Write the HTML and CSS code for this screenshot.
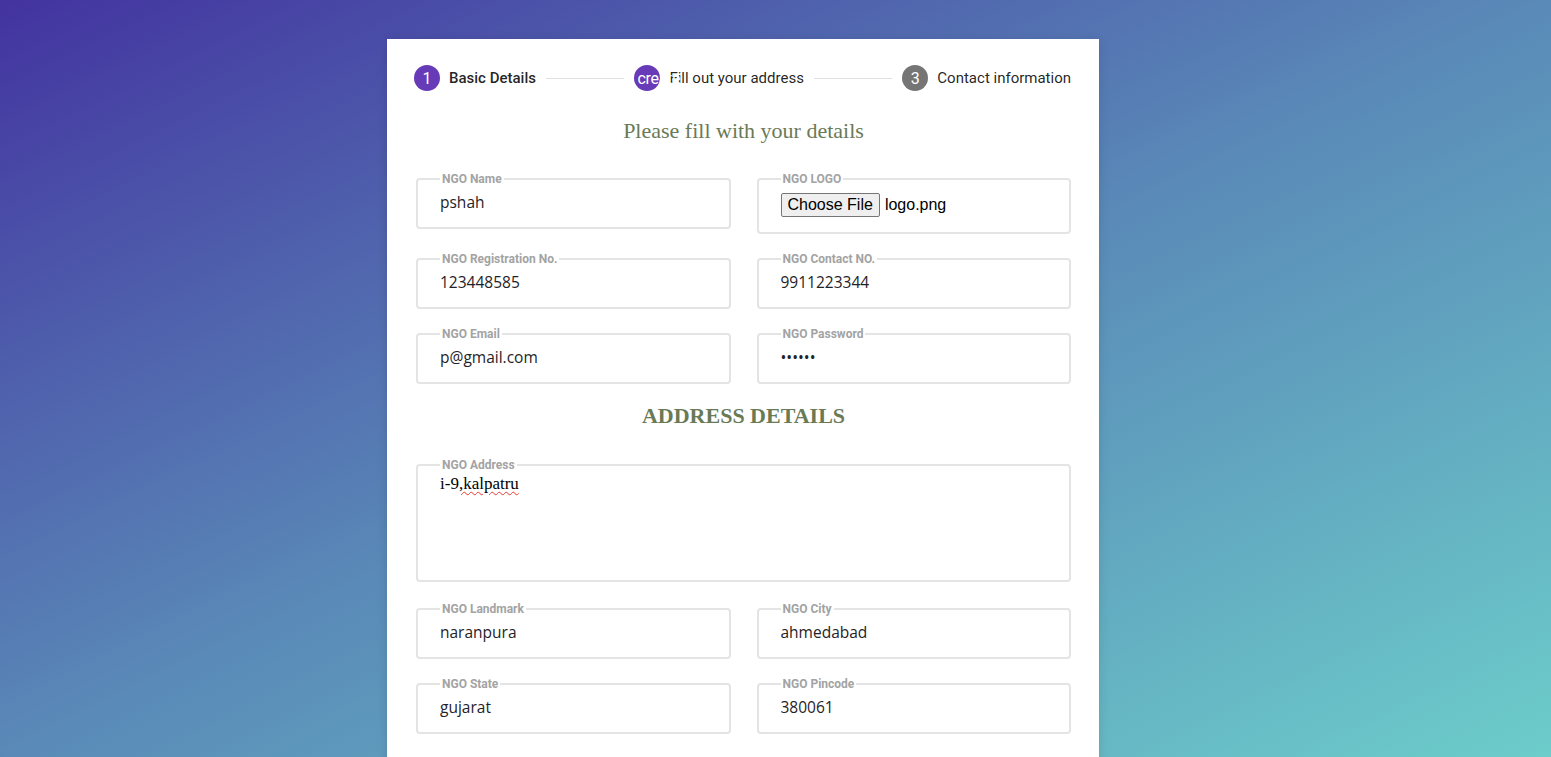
FILE: index.html
```html
<!DOCTYPE html>
<html lang="en">
<head>
<meta charset="utf-8">
<title>NGO Registration</title>
<link rel="stylesheet" href="styles.css">
</head>
<body>
<main class="card">
  <nav class="stepper">
    <div class="step">
      <span class="step-icon active"><span class="step-num">1</span></span>
      <span class="step-label strong">Basic Details</span>
    </div>
    <span class="step-line"></span>
    <div class="step">
      <span class="step-icon active"><span class="step-glyph">create</span></span>
      <span class="step-label">Fill out your address</span>
    </div>
    <span class="step-line"></span>
    <div class="step">
      <span class="step-icon idle"><span class="step-num">3</span></span>
      <span class="step-label">Contact information</span>
    </div>
  </nav>

  <h2 class="form-title">Please fill with your details</h2>

  <section class="grid">
    <fieldset class="field">
      <legend>NGO Name</legend>
      <input class="value" type="text" value="pshah">
    </fieldset>
    <fieldset class="field">
      <legend>NGO LOGO</legend>
      <div class="file-row">
        <button class="file-btn" type="button">Choose File</button>
        <span class="file-name">logo.png</span>
      </div>
    </fieldset>
    <fieldset class="field">
      <legend>NGO Registration No.</legend>
      <input class="value" type="text" value="123448585">
    </fieldset>
    <fieldset class="field">
      <legend>NGO Contact NO.</legend>
      <input class="value" type="text" value="9911223344">
    </fieldset>
    <fieldset class="field">
      <legend>NGO Email</legend>
      <input class="value" type="text" value="p@gmail.com">
    </fieldset>
    <fieldset class="field">
      <legend>NGO Password</legend>
      <input class="value" type="password" value="secret">
    </fieldset>
  </section>

  <h2 class="section-title">ADDRESS DETAILS</h2>

  <fieldset class="field wide">
    <legend>NGO Address</legend>
    <div class="textarea">i-9<span class="misspelt">,kalpatru</span></div>
  </fieldset>

  <section class="grid lower">
    <fieldset class="field">
      <legend>NGO Landmark</legend>
      <input class="value" type="text" value="naranpura">
    </fieldset>
    <fieldset class="field">
      <legend>NGO City</legend>
      <input class="value" type="text" value="ahmedabad">
    </fieldset>
    <fieldset class="field">
      <legend>NGO State</legend>
      <input class="value" type="text" value="gujarat">
    </fieldset>
    <fieldset class="field">
      <legend>NGO Pincode</legend>
      <input class="value" type="text" value="380061">
    </fieldset>
  </section>
</main>
</body>
</html>
```
FILE: styles.css
```css
html {
  height: 100%;
  background: linear-gradient(to bottom right, #4333a0 0%, #5a8ab8 50%, #6ccdca 100%) fixed;
}
body {
  margin: 0;
  min-height: 100%;
  font-family: Roboto, "Liberation Sans", sans-serif;
  overflow: hidden;
}
.card {
  width: 712px;
  box-sizing: border-box;
  margin: 39px 0 0 387px;
  background: #fff;
  padding: 26px 28px 120px 29px;
  box-shadow: 0 2px 10px rgba(0, 0, 0, 0.12);
  min-height: 900px;
}
.stepper {
  display: flex;
  align-items: center;
  margin: 0 0 0 -2px;
  height: 26px;
}
.step {
  display: flex;
  align-items: center;
  gap: 9px;
}
.step-line {
  flex: 1;
  height: 1px;
  background: #e0e0e0;
  margin: 0 10px 0 10px;
}
.step-icon {
  width: 26px;
  height: 26px;
  border-radius: 50%;
  display: flex;
  align-items: center;
  justify-content: flex-start;
  color: #fff;
  font-size: 16px;
  flex: none;
}
.step-icon.active { background: #673ab7; }
.step-icon.idle { background: #757575; }
.step-num {
  width: 26px;
  text-align: center;
  font-size: 16px;
}
.step-glyph {
  position: relative;
  z-index: 2;
  padding-left: 3px;
  font-size: 16px;
  white-space: nowrap;
  letter-spacing: -0.3px;
}
.step-label {
  font-size: 15px;
  color: rgba(0, 0, 0, 0.87);
  white-space: nowrap;
}
.step-label.strong { font-weight: 500; }

.form-title {
  font-family: "Liberation Serif", serif;
  font-weight: normal;
  font-size: 22px;
  line-height: 25px;
  color: #6a7a55;
  text-align: center;
  margin: 27px 0 29px;
}
.section-title {
  font-family: "Liberation Serif", serif;
  font-weight: bold;
  font-size: 22px;
  line-height: 25px;
  color: #6a7a55;
  text-align: center;
  margin: 19px 0 30px;
}
.grid {
  display: grid;
  grid-template-columns: 1fr 1fr;
  column-gap: 26px;
  row-gap: 18px;
  align-items: start;
}
.grid.lower { margin-top: 20px; }
.field {
  margin: 0;
  min-width: 0;
  border: 2px solid #e4e4e4;
  border-radius: 4px;
  padding: 4px 22px 13px;
}
.field legend {
  padding: 0 2px;
  font-family: Roboto, "Liberation Sans", sans-serif;
  font-size: 12px;
  line-height: 14px;
  font-weight: 700;
  color: #a3a3a3;
}
.value {
  display: block;
  width: 100%;
  box-sizing: border-box;
  border: 0;
  outline: 0;
  padding: 0;
  margin: 0;
  height: 24px;
  background: transparent;
  font-family: "Open Sans", "Noto Sans", sans-serif;
  font-size: 15.5px;
  color: #1f2328;
}
.file-row {
  display: flex;
  align-items: center;
  gap: 5px;
  height: 29px;
}
.file-btn {
  font-family: "Liberation Sans", Arial, sans-serif;
  font-size: 16px;
  line-height: 18px;
  padding: 2px 6px;
  border: 1px solid #767676;
  border-radius: 2px;
  background: #efefef;
  color: #000;
  margin: 0;
}
.file-name {
  font-family: "Liberation Sans", Arial, sans-serif;
  font-size: 16px;
  color: #000;
}
.textarea {
  height: 93px;
  margin-top: -2px;
  padding-top: 0;
  box-sizing: border-box;
  font-family: "Liberation Serif", serif;
  font-size: 17px;
  line-height: 20px;
  color: #000;
}
.misspelt {
  text-decoration: underline wavy #e53935;
  text-decoration-thickness: 1px;
  text-underline-offset: 2px;
}
```
